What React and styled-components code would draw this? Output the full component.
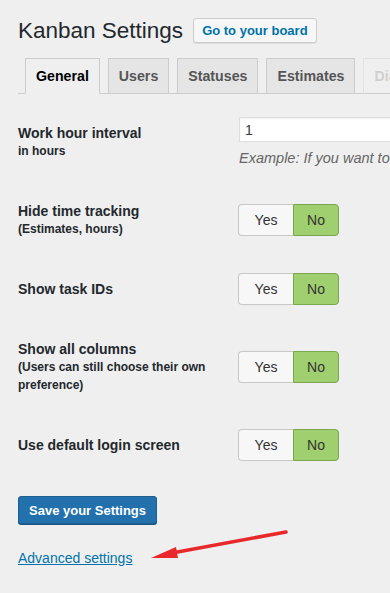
import React from "react";
import styled, { createGlobalStyle } from "styled-components";

const Global = createGlobalStyle`
  html, body { margin: 0; padding: 0; overflow: hidden; }
  body {
    background: #efefef;
    font-family: "Liberation Sans", Arial, sans-serif;
    color: #23282d;
  }
`;

const Page = styled.div`
  position: relative;
  width: 390px;
  height: 593px;
  overflow: hidden;
  padding: 18px 0 0 18px;
  box-sizing: border-box;
`;

const Header = styled.div`
  display: flex;
  align-items: center;
  gap: 10px;
  white-space: nowrap;
`;

const Title = styled.h1`
  margin: 0;
  font-size: 22.5px;
  font-weight: 400;
  line-height: 25px;
  color: #23282d;
`;

const GhostButton = styled.a`
  display: inline-flex;
  align-items: center;
  height: 25px;
  box-sizing: border-box;
  padding: 0 8px;
  border: 1px solid #ccc;
  border-radius: 3px;
  background: #f7f7f7;
  box-shadow: 0 1px 0 #ddd;
  color: #0073aa;
  font-size: 13px;
  font-weight: 700;
  text-decoration: none;
`;

const TabStrip = styled.div`
  display: flex;
  gap: 8px;
  margin-top: 15px;
  padding-left: 7px;
  border-bottom: 1px solid #ccc;
  white-space: nowrap;
`;

const Tab = styled.div`
  flex: none;
  margin-bottom: -1px;
  padding: 5px 10px;
  line-height: 24px;
  font-size: 14.2px;
  font-weight: 700;
  border: 1px solid ${(p) => (p.$faded ? "#e2e2e2" : "#ccc")};
  border-bottom-color: ${(p) => (p.$active ? "#efefef" : "#ccc")};
  background: ${(p) => (p.$active || p.$faded ? "#efefef" : "#e5e5e5")};
  color: ${(p) => (p.$active ? "#000" : p.$faded ? "#cfcfcf" : "#555")};
`;

const Form = styled.div`
  margin-top: 6px;
  display: flex;
  flex-direction: column;
`;

const Row = styled.div`
  display: grid;
  grid-template-columns: 220px auto;
  align-items: center;
  padding: 17px 0 18px;
`;

const LabelCell = styled.div`
  padding-right: 20px;
  box-sizing: border-box;
`;

const Label = styled.div`
  font-size: 14px;
  font-weight: 700;
  line-height: 18px;
  color: #23282d;
`;

const Sub = styled.div`
  font-size: 12px;
  font-weight: 700;
  line-height: 18px;
  color: #23282d;
`;

const Control = styled.div`
  white-space: nowrap;
`;

const TextInput = styled.input`
  display: block;
  margin-left: 1px;
  width: 320px;
  height: 25px;
  box-sizing: border-box;
  padding: 0 5px;
  border: 1px solid #ddd;
  box-shadow: inset 0 1px 2px rgba(0, 0, 0, 0.07);
  background: #fff;
  font-family: "Liberation Sans", Arial, sans-serif;
  font-size: 14px;
  color: #32373c;
  outline: none;
`;

const Hint = styled.div`
  margin: 7px 0 0 1px;
  font-size: 14.5px;
  font-style: italic;
  line-height: 18px;
  color: #666;
`;

const Toggle = styled.div`
  display: inline-flex;
  height: 32px;
`;

const ToggleOption = styled.div`
  display: flex;
  align-items: center;
  justify-content: center;
  box-sizing: border-box;
  width: ${(p) => p.$w}px;
  font-size: 14px;
  color: #333;
  border: 1px solid ${(p) => (p.$on ? "#7ba74f" : "#c8c8c8")};
  ${(p) => (p.$on ? "" : "border-right: none;")}
  background: ${(p) => (p.$on ? "#9fcf6e" : "#f7f7f7")};
  border-radius: ${(p) => (p.$first ? "4px 0 0 4px" : "0 4px 4px 0")};
`;

const PrimaryButton = styled.button`
  display: block;
  margin-top: 17px;
  height: 28px;
  padding: 0 10px;
  box-sizing: border-box;
  border: 1px solid #1d5f92;
  border-radius: 3px;
  background: #2271ad;
  box-shadow: 0 1px 0 #1a5582;
  color: #fff;
  font-family: "Liberation Sans", Arial, sans-serif;
  font-size: 13px;
  font-weight: 700;
  cursor: pointer;
`;

const Link = styled.a`
  display: inline-block;
  margin-top: 25px;
  font-size: 14px;
  line-height: 18px;
  color: #0073aa;
  text-decoration: underline;
`;

const Arrow = styled.svg`
  position: absolute;
  left: 0;
  top: 0;
  pointer-events: none;
`;

function YesNo() {
  return (
    <Toggle>
      <ToggleOption $w={55} $first>Yes</ToggleOption>
      <ToggleOption $w={46} $on>No</ToggleOption>
    </Toggle>
  );
}

const rows = [
  { label: "Hide time tracking", sub: "(Estimates, hours)" },
  { label: "Show task IDs" },
  { label: "Show all columns", sub: "(Users can still choose their own preference)" },
  { label: "Use default login screen" },
];

export default function App() {
  return (
    <>
      <Global />
      <Page>
        <Header>
          <Title>Kanban Settings</Title>
          <GhostButton href="#">Go to your board</GhostButton>
        </Header>
        <TabStrip>
          <Tab $active>General</Tab>
          <Tab>Users</Tab>
          <Tab>Statuses</Tab>
          <Tab>Estimates</Tab>
          <Tab $faded>Diagnostics</Tab>
        </TabStrip>
        <Form>
          <Row>
            <LabelCell>
              <Label>Work hour interval</Label>
              <Sub>in hours</Sub>
            </LabelCell>
            <Control>
              <TextInput defaultValue="1" />
              <Hint>Example: If you want to track time in half hours, enter 0.5</Hint>
            </Control>
          </Row>
          {rows.map((r) => (
            <Row key={r.label}>
              <LabelCell>
                <Label>{r.label}</Label>
                {r.sub && <Sub>{r.sub}</Sub>}
              </LabelCell>
              <Control>
                <YesNo />
              </Control>
            </Row>
          ))}
        </Form>
        <PrimaryButton>Save your Settings</PrimaryButton>
        <Link href="#">Advanced settings</Link>
        <Arrow width="390" height="593" viewBox="0 0 390 593">
          <line x1="286" y1="532" x2="172" y2="553" stroke="#e8282b" strokeWidth="3.5" strokeLinecap="round" />
          <polygon points="151,558 176,547 178,558" fill="#e8282b" />
        </Arrow>
      </Page>
    </>
  );
}
